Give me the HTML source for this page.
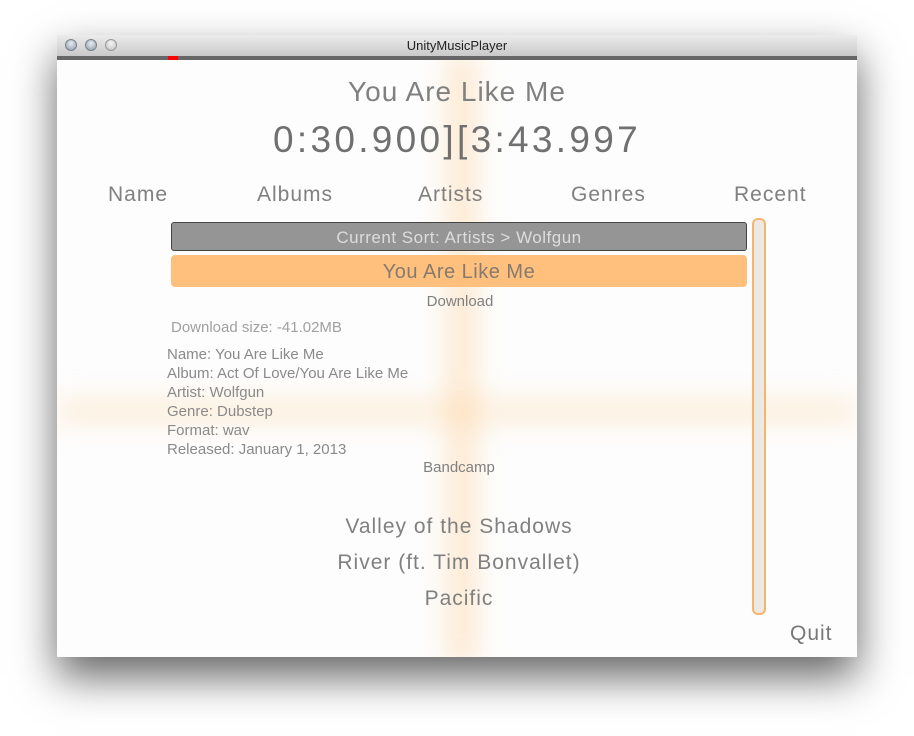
<!DOCTYPE html>
<html><head><meta charset="utf-8"><style>
body{margin:0;width:914px;height:736px;background:#fff;position:relative;overflow:hidden;font-family:"Liberation Sans",sans-serif;}
.win{position:absolute;left:57px;top:35px;width:800px;height:622px;box-shadow:0 20px 40px rgba(0,0,0,.6);background:#fdfdfd;overflow:hidden;}
.tb{position:absolute;left:0;top:0;width:800px;height:21px;background:linear-gradient(#ececec,#c9c9c9);border-bottom:1px solid #999;text-align:center;font-size:13px;line-height:21px;color:#222;}
.dot{position:absolute;top:4px;width:12px;height:12px;border-radius:50%;background:radial-gradient(circle at 50% 35%,#e6ecf2,#8e9aa6);border:1px solid #78828c;box-sizing:border-box;}
.gb{position:absolute;left:0;top:21px;width:800px;height:4px;background:#666;}
.red{position:absolute;left:111px;top:21px;width:10px;height:4px;background:#f00;}
.glow{position:absolute;filter:blur(14px);background:rgba(255,190,110,.35);}
.t{position:absolute;left:0;width:800px;text-align:center;color:#808080;white-space:nowrap;}
.l{position:absolute;color:#8a8a8a;font-size:15px;white-space:nowrap;}
</style></head><body>
<div class="win">
<div class="glow" style="left:392px;top:20px;width:26px;height:610px;"></div>
<div class="glow" style="left:0;top:365px;width:800px;height:22px;background:rgba(255,200,130,.3)"></div>
<div class="tb">UnityMusicPlayer
<div class="dot" style="left:8px"></div><div class="dot" style="left:28px"></div><div class="dot" style="left:48px;background:radial-gradient(circle at 50% 35%,#f5f5f5,#bdbdbd);border-color:#999"></div></div>
<div class="gb"></div><div class="red"></div>
<div class="t" style="top:41px;font-size:28px;letter-spacing:1px;">You Are Like Me</div>
<div class="t" style="top:84px;font-size:37px;letter-spacing:3.3px;color:#707070">0:30.900][3:43.997</div>
<div class="t" style="top:148px;font-size:21px;left:0;width:800px;text-align:left;">
<span style="position:absolute;left:51px;letter-spacing:1px">Name</span>
<span style="position:absolute;left:200px;letter-spacing:1px">Albums</span>
<span style="position:absolute;left:361px;letter-spacing:1px">Artists</span>
<span style="position:absolute;left:514px;letter-spacing:1px">Genres</span>
<span style="position:absolute;left:677px;letter-spacing:1px">Recent</span></div>
<div style="position:absolute;left:114px;top:187px;width:574px;height:27px;background:#959595;border:1px solid #444;border-radius:3px;color:#ddd;text-align:center;font-size:17px;line-height:29px;letter-spacing:.5px;">Current Sort: Artists &gt; Wolfgun</div>
<div style="position:absolute;left:114px;top:220px;width:576px;height:32px;background:#fec07c;border-radius:4px;color:#857a70;text-align:center;font-size:20px;line-height:34px;letter-spacing:.5px;">You Are Like Me</div>
<div class="t" style="top:258px;font-size:15px;left:3px">Download</div>
<div class="l" style="left:114px;top:284px;color:#a0a0a0">Download size: -41.02MB</div>
<div class="l" style="left:110px;top:310px;line-height:19px">Name: You Are Like Me<br>Album: Act Of Love/You Are Like Me<br>Artist: Wolfgun<br>Genre: Dubstep<br>Format: wav<br>Released: January 1, 2013</div>
<div class="t" style="top:424px;font-size:15px;left:2px">Bandcamp</div>
<div class="t" style="top:480px;font-size:21px;letter-spacing:1px;left:2px">Valley of the Shadows</div>
<div class="t" style="top:516px;font-size:21px;letter-spacing:1px;left:2px">River (ft. Tim Bonvallet)</div>
<div class="t" style="top:552px;font-size:21px;letter-spacing:1px;left:2px">Pacific</div>
<div style="position:absolute;left:695px;top:183px;width:10px;height:393px;background:#ece8e4;border:2px solid #f6b56e;border-radius:6px;"></div>
<div class="l" style="left:733px;top:587px;font-size:21px;color:#777;letter-spacing:1px">Quit</div>
</div>
</body></html>
